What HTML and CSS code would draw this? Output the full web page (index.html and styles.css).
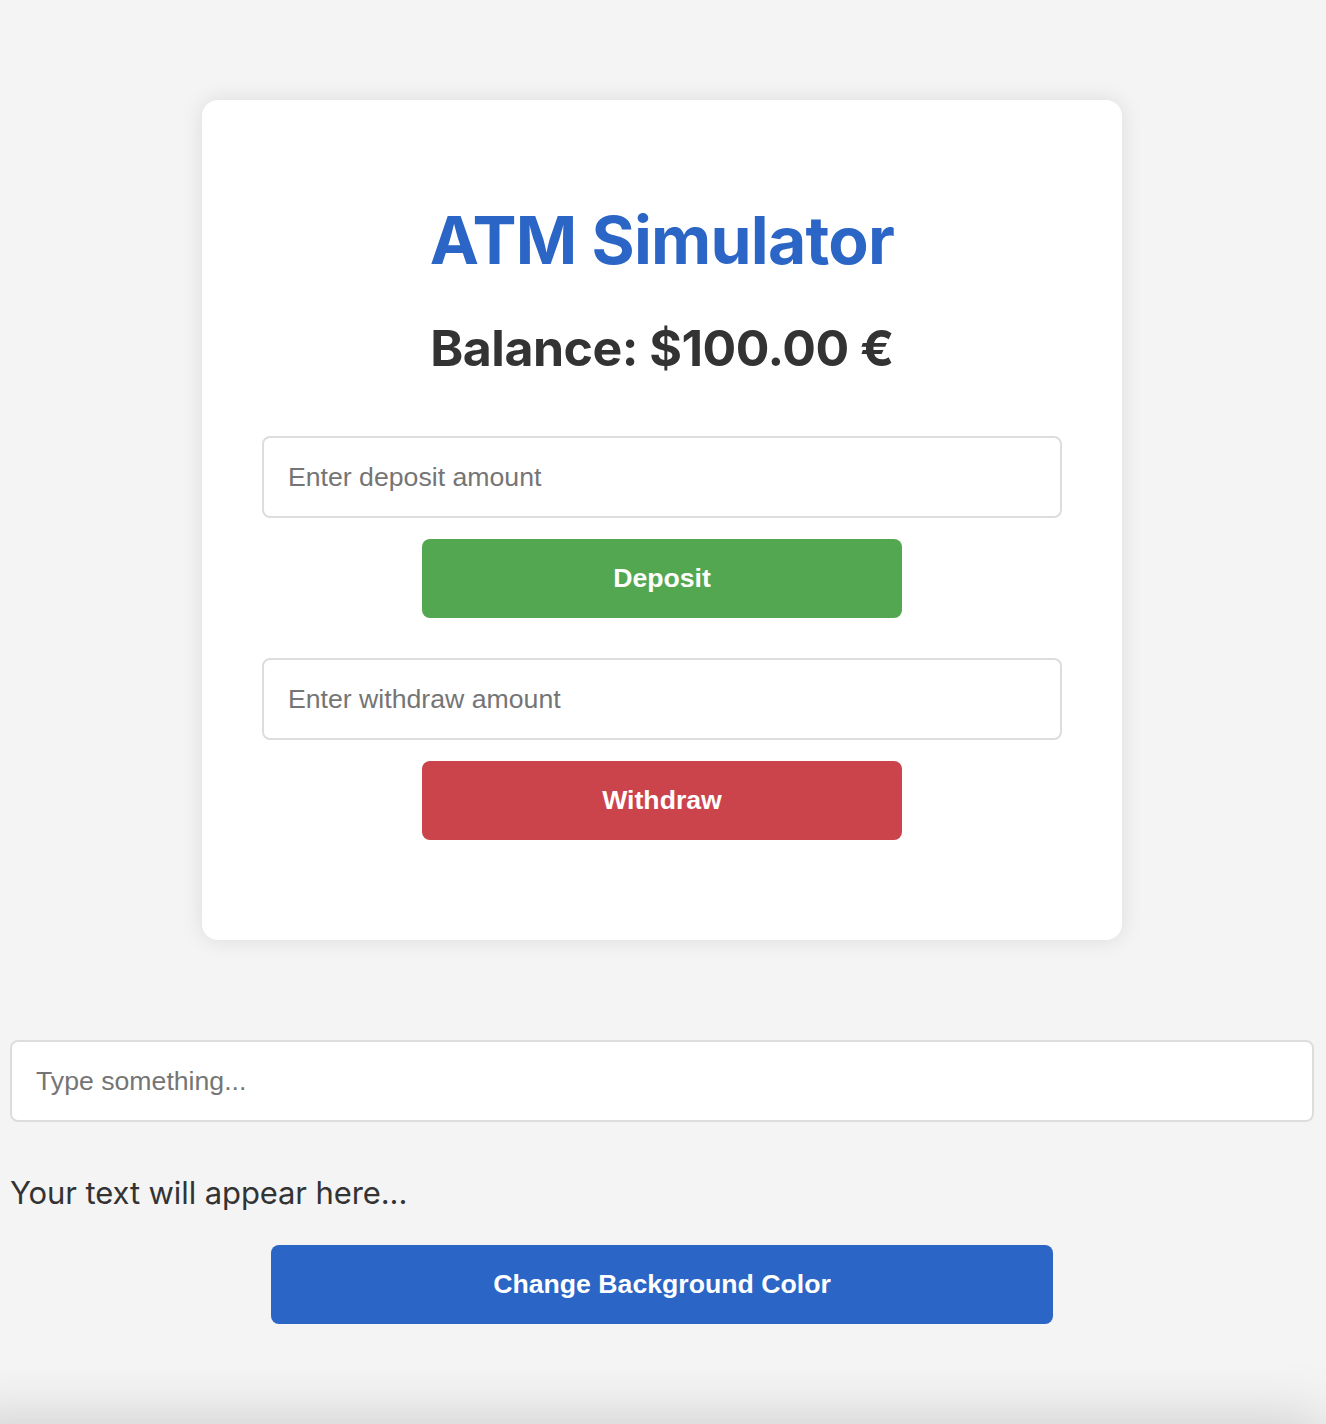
FILE: index.html
```html
<!DOCTYPE html>
<html lang="en">
<head>
<meta charset="utf-8">
<title>ATM Simulator</title>
<link rel="stylesheet" href="styles.css">
</head>
<body>
<div class="page">
  <div class="card">
    <h1 class="title">ATM Simulator</h1>
    <h2 class="balance">Balance: $100.00 €</h2>
    <div class="form">
      <input class="field" type="number" placeholder="Enter deposit amount">
      <button class="btn btn-deposit">Deposit</button>
      <input class="field field-next" type="number" placeholder="Enter withdraw amount">
      <button class="btn btn-withdraw">Withdraw</button>
    </div>
  </div>

  <div class="extra">
    <input class="field" type="text" placeholder="Type something...">
    <p class="echo">Your text will appear here...</p>
    <button class="btn btn-color">Change Background Color</button>
  </div>

  <div class="below"></div>
</div>
</body>
</html>
```

FILE: styles.css
```css
html, body {
  margin: 0;
  padding: 0;
}

body {
  background: #f4f4f4;
  font-family: Inter, "Noto Sans", sans-serif;
  color: #333;
  overflow-x: hidden;
}

.page {
  padding: 100px 12px 0 10px;
}

.card {
  width: 920px;
  margin: 0 auto;
  box-sizing: border-box;
  padding: 60px 60px 100px;
  background: #fff;
  border-radius: 16px;
  box-shadow: 0 0 22px rgba(0, 0, 0, 0.1);
}

.title {
  margin: 41px 0 0;
  font-size: 66px;
  line-height: 79px;
  font-weight: 700;
  color: #2b65c6;
  text-align: center;
  letter-spacing: -0.75px;
}

.balance {
  margin: 38px 0 0;
  font-size: 50px;
  line-height: 61px;
  font-weight: 700;
  color: #333;
  text-align: center;
  letter-spacing: -0.5px;
}

.form {
  margin-top: 57px;
}

.field {
  display: block;
  width: 100%;
  height: 82px;
  box-sizing: border-box;
  margin: 0;
  padding: 0 24px;
  border: 2px solid #ddd;
  border-radius: 8px;
  background: #fff;
  font-family: "Liberation Sans", Arial, sans-serif;
  font-size: 26.67px;
  color: #333;
  outline: none;
}

.field::placeholder {
  color: #757575;
}

.field-next {
  margin-top: 40px;
}

.btn {
  display: block;
  width: 60%;
  height: 79px;
  margin: 21px auto 0;
  padding: 0;
  border: 0;
  border-radius: 8px;
  color: #fff;
  font-family: "Liberation Sans", Arial, sans-serif;
  font-size: 26.67px;
  font-weight: 700;
  cursor: pointer;
}

.btn-deposit {
  background: #54a751;
}

.btn-withdraw {
  background: #cc444b;
}

.btn-color {
  background: #2b65c6;
  margin-top: 33px;
}

.extra {
  margin-top: 100px;
}

.echo {
  margin: 52px 0 0;
  font-size: 31px;
  line-height: 38px;
  font-weight: 400;
  color: #333;
  letter-spacing: -0.1px;
}

.below {
  margin: 100px -12px 0 -60px;
  height: 300px;
  background: #f4f4f4;
  box-shadow: 0 0 60px rgba(0, 0, 0, 0.18);
}
```
